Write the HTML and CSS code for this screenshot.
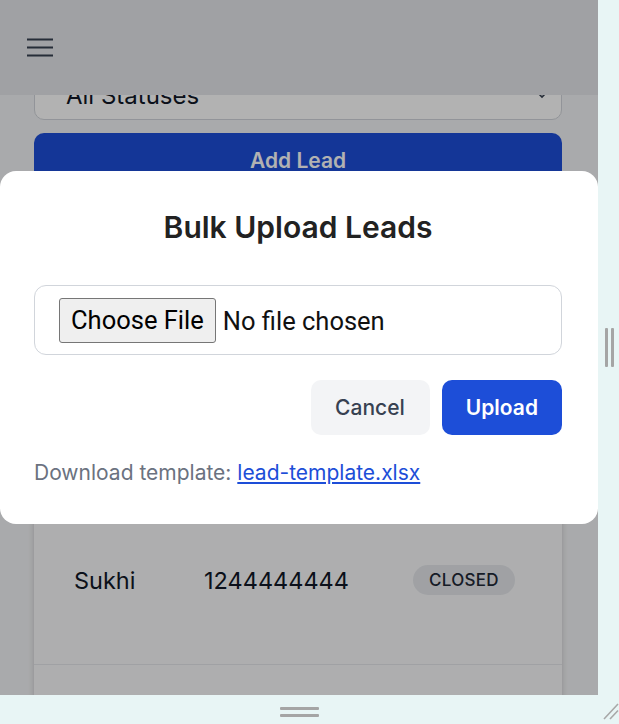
FILE: index.html
```html
<!DOCTYPE html>
<html lang="en">
<head>
<meta charset="utf-8">
<title>Leads</title>
<link rel="stylesheet" href="styles.css">
</head>
<body>
<div class="workspace">
  <div class="frame">
    <div class="page">
      <div class="content">
        <div class="select">
          <span>All Statuses</span>
          <svg class="chev" width="14" height="14" viewBox="0 0 14 14"><path d="M3 5l4 4 4-4" fill="none" stroke="#374151" stroke-width="1.6"/></svg>
        </div>
        <button class="add-btn">Add Lead</button>
        <div class="card">
          <div class="row row-top">
            <span>Aman</span><span>9876543210</span><span class="badge">NEW</span>
          </div>
          <div class="row">
            <span>Sukhi</span><span>1244444444</span><span class="badge">CLOSED</span>
          </div>
          <div class="row">
            <span></span><span></span><span></span>
          </div>
        </div>
      </div>
      <header class="topbar">
        <svg class="burger" width="26" height="20" viewBox="0 0 26 20"><path d="M0 2.5h26M0 10.5h26M0 18.5h26" stroke="#374151" stroke-width="2" fill="none"/></svg>
      </header>
    </div>
    <div class="backdrop">
      <div class="modal">
        <h2 class="modal-title">Bulk Upload Leads</h2>
        <div class="file-box">
          <input type="file" class="file-input">
        </div>
        <div class="actions">
          <button class="btn btn-cancel">Cancel</button>
          <button class="btn btn-upload">Upload</button>
        </div>
        <p class="template">Download template: <a href="#" class="template-link">lead-template.xlsx</a></p>
      </div>
    </div>
  </div>
  <div class="vhandle"><i></i><i></i></div>
  <div class="hhandle"><i></i><i></i></div>
  <div class="corner">
    <svg width="16" height="18" viewBox="0 0 16 18"><path d="M1 17L15 2M7 17L15 8.5" stroke="#a8a8a8" stroke-width="1.6" fill="none"/></svg>
  </div>
</div>
</body>
</html>
```

FILE: styles.css
```css
* { box-sizing: border-box; }
html, body { margin: 0; padding: 0; }
body {
  width: 619px;
  height: 724px;
  overflow: hidden;
  background: #e8f5f5;
  font-family: Inter, "Noto Sans", sans-serif;
}
.workspace {
  display: grid;
  grid-template-columns: 598px 21px;
  grid-template-rows: 695px 29px;
  width: 619px;
  height: 724px;
}
.frame {
  position: relative;
  overflow: hidden;
  background: #f3f4f6;
}
.page { position: relative; height: 100%; }
.content {
  display: flex;
  flex-direction: column;
  padding: 70px 36px 0 34px;
  gap: 13px;
}
.select {
  height: 50px;
  border: 1px solid #d1d5db;
  border-radius: 10px;
  background: #fff;
  display: flex;
  align-items: center;
  justify-content: space-between;
  padding: 0 12px 0 31px;
  font-size: 24px;
  color: #111827;
}
.add-btn {
  height: 55px;
  border: 0;
  border-radius: 10px;
  background: #1d4ed8;
  color: #fff;
  font-family: Inter, sans-serif;
  font-weight: 600;
  font-size: 21px;
}
.card {
  background: #f9fafb;
  box-shadow: 0 1px 6px rgba(0,0,0,0.18);
  display: flex;
  flex-direction: column;
}
.row {
  height: 169px;
  display: grid;
  grid-template-columns: 130px 209px auto;
  align-items: center;
  padding-left: 40px;
  border-bottom: 1px solid #e5e7eb;
  font-size: 23.5px;
  color: #111827;
}
.row-top { height: 295px; }
.badge {
  justify-self: start;
  height: 30px;
  padding: 0 16px;
  border-radius: 15px;
  background: #e5e7eb;
  color: #1f2937;
  font-size: 17px;
  font-weight: 500;
  letter-spacing: 0.3px;
  display: flex;
  align-items: center;
}
.topbar {
  position: absolute;
  top: 0;
  left: 0;
  right: 0;
  height: 95px;
  background: #e5e7eb;
  display: flex;
  align-items: center;
  padding-left: 27px;
}
.burger { margin-top: -2px; }
.backdrop {
  position: absolute;
  inset: 0;
  background: rgba(0,0,0,0.3);
  display: flex;
  align-items: center;
}
.modal {
  width: 598px;
  background: #fff;
  border-radius: 16px;
  padding: 38px 36px 37px 34px;
}
.modal-title {
  margin: 0 0 40px;
  text-align: center;
  font-size: 30px;
  line-height: 36px;
  font-weight: 600;
  color: #222;
}
.file-box {
  height: 70px;
  border: 1px solid #d1d5db;
  border-radius: 12px;
  padding: 12px 24px;
  display: flex;
  align-items: center;
}
.file-input {
  font-family: Roboto, sans-serif;
  font-size: 25.5px;
  color: #111;
}
.file-input::file-selector-button {
  font-family: Roboto, sans-serif;
  font-size: 25.5px;
  height: 45px;
  padding: 0 11px;
  margin-right: 7px;
  border: 1px solid #767676;
  border-radius: 3px;
  background: #efefef;
  color: #000;
}
.actions {
  display: flex;
  justify-content: flex-end;
  gap: 12px;
  margin-top: 25px;
}
.btn {
  height: 55px;
  padding: 0 24px;
  border: 0;
  border-radius: 10px;
  font-family: Inter, sans-serif;
  font-size: 21px;
}
.btn-cancel { background: #f3f4f6; color: #374151; font-weight: 500; padding: 0 25px 0 24px; }
.btn-upload { background: #1d4ed8; color: #fff; font-weight: 600; }
.template {
  margin: 24px 0 0;
  font-size: 21px;
  line-height: 28px;
  color: #6b7280;
}
.template-link { color: #1d4ed8; text-decoration: underline; }
.vhandle {
  display: flex;
  justify-content: center;
  align-items: center;
  gap: 3px;
  padding-left: 1px;
}
.vhandle i { width: 3px; height: 39px; background: #a5a5a5; border-radius: 1px; }
.hhandle {
  display: flex;
  flex-direction: column;
  align-items: center;
  padding-top: 12px;
  gap: 4px;
}
.hhandle i { width: 39px; height: 3px; background: #a5a5a5; border-radius: 1px; }
.corner {
  display: flex;
  align-items: flex-start;
  justify-content: flex-end;
  padding-top: 7px;
}
```
